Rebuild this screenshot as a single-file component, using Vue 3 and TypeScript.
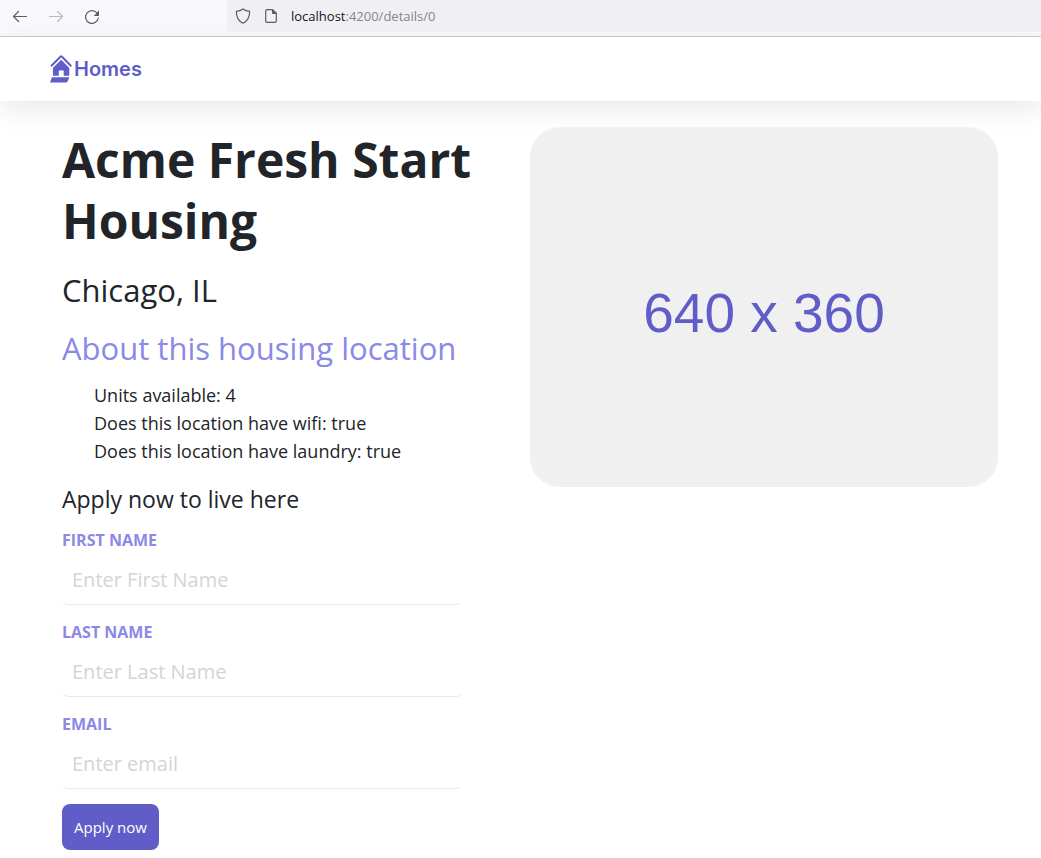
<script setup lang="ts">
import { reactive } from 'vue'

interface Field {
  id: 'firstName' | 'lastName' | 'email'
  label: string
  placeholder: string
  type: string
}

const location = {
  name: 'Acme Fresh Start Housing',
  city: 'Chicago',
  state: 'IL',
  availableUnits: 4,
  wifi: true,
  laundry: true,
}

const fields: Field[] = [
  { id: 'firstName', label: 'First Name', placeholder: 'Enter First Name', type: 'text' },
  { id: 'lastName', label: 'Last Name', placeholder: 'Enter Last Name', type: 'text' },
  { id: 'email', label: 'Email', placeholder: 'Enter email', type: 'email' },
]

const form = reactive({ firstName: '', lastName: '', email: '' })

function submit(): void {
  form.firstName = ''
  form.lastName = ''
  form.email = ''
}
</script>

<template>
  <div class="page">
    <div class="toolbar">
      <div class="nav-buttons">
        <button type="button" class="tool" aria-label="Back">
          <svg viewBox="0 0 16 16" width="16" height="16"><path d="M14.500 7.500H1.600M6.500 2.500 1.500 7.500 6.500 12.500" /></svg>
        </button>
        <button type="button" class="tool" aria-label="Forward" disabled>
          <svg viewBox="0 0 16 16" width="16" height="16"><path d="M1.500 7.500h12.900M9.500 2.500 14.500 7.500 9.500 12.500" /></svg>
        </button>
        <button type="button" class="tool" aria-label="Reload">
          <svg viewBox="0 0 16 16" width="16" height="16">
            <path d="M13 4A6.400 6.400 0 1 0 14.300 9" />
            <path class="solid" d="M15 1.200v5.300a.5.5 0 0 1-.5.5H9.800z" />
          </svg>
        </button>
      </div>
      <div class="address">
        <svg viewBox="0 0 16 16" width="16" height="16">
          <path d="M8 .9C9.900 2.300 12 3.100 14.600 3.300 14.800 9 12.500 13.200 8 15.200 3.500 13.200 1.200 9 1.400 3.300 4 3.100 6.100 2.300 8 .9z" />
        </svg>
        <svg viewBox="0 0 16 16" width="16" height="16">
          <path d="M9.500 1.700H4A1.300 1.300 0 0 0 2.700 3v10A1.300 1.300 0 0 0 4 14.300h8a1.300 1.300 0 0 0 1.300-1.300V5.500z" />
          <path class="solid" d="M9 1.200h.8L13.800 5.200V6H10a1 1 0 0 1-1-1z" />
        </svg>
        <span class="url"><span class="host">localhost</span>:4200/details/0</span>
      </div>
    </div>

    <header class="site-header">
      <a href="#" class="brand">
        <svg viewBox="0 0 22 28" width="22" height="28">
          <path class="roof" d="M1 11.300 10.400 1.700Q11.200 1 12 1.700L21.300 11.300" />
          <path d="M11.200 4.800 19.300 13v7.800H13.700V15.500H8.800v5.300H2.900V13z" />
          <path d="M2 22.200H19.300L17.600 26.600Q17.200 27.600 16 27.600H0z" />
        </svg>
        <span>Homes</span>
      </a>
    </header>

    <main class="details">
      <article class="listing">
        <h1>{{ location.name }}</h1>
        <p class="city">{{ location.city }}, {{ location.state }}</p>
        <section>
          <h2>About this housing location</h2>
          <ul>
            <li>Units available: {{ location.availableUnits }}</li>
            <li>Does this location have wifi: {{ location.wifi }}</li>
            <li>Does this location have laundry: {{ location.laundry }}</li>
          </ul>
        </section>
        <section>
          <h3>Apply now to live here</h3>
          <form @submit.prevent="submit">
            <template v-for="field in fields" :key="field.id">
              <label :for="field.id">{{ field.label }}</label>
              <input :id="field.id" v-model="form[field.id]" :type="field.type" :placeholder="field.placeholder" />
            </template>
            <button type="submit" class="primary">Apply now</button>
          </form>
        </section>
      </article>
      <div class="photo" role="img" aria-label="640 x 360">640 x 360</div>
    </main>
  </div>
</template>

<style>
body {
  margin: 0;
  background: #fff;
}
</style>

<style scoped>
.page {
  color: #212529;
  font-family: "Open Sans", "Noto Sans", sans-serif;
  font-size: 16px;
}

.toolbar {
  display: flex;
  height: 36px;
  background: #f9f9fb;
  border-bottom: 1px solid #ccccd0;
}

.nav-buttons {
  display: flex;
  gap: 20px;
  padding: 9px 12px 0;
  width: 203px;
}

.tool {
  width: 16px;
  height: 16px;
  padding: 0;
  border: 0;
  background: none;
}

.tool:disabled {
  opacity: 0.4;
}

.toolbar svg {
  display: block;
  flex: none;
  fill: none;
  stroke: #5b5b66;
  stroke-width: 1.2;
  stroke-linecap: round;
  stroke-linejoin: round;
}

.toolbar .solid {
  fill: #5b5b66;
  stroke: none;
}

.address {
  display: flex;
  flex: 1;
  align-items: center;
  gap: 12px;
  height: 32px;
  padding-left: 8px;
  border-radius: 0 0 0 4px;
  background: #f0f0f4;
}

.url {
  color: #85858c;
  font-size: 13px;
  line-height: 20px;
}

.host {
  color: #15141a;
}

.site-header {
  display: flex;
  align-items: center;
  height: 64px;
  padding: 0 50px;
  background: #fff;
  box-shadow: 0 8px 28px rgba(0, 0, 0, 0.09);
}

.brand {
  display: flex;
  align-items: center;
  gap: 2px;
  color: #605dc8;
  font-family: Inter, sans-serif;
  font-size: 20px;
  font-weight: 600;
  line-height: 28px;
  text-decoration: none;
}

.brand svg {
  fill: #605dc8;
}

.brand .roof {
  fill: none;
  stroke: #605dc8;
  stroke-width: 2;
}

.details {
  display: grid;
  grid-template-columns: 1fr 1fr;
  align-items: start;
  padding: 26px 43px 8px 62px;
}

h1,
h2,
h3,
p,
ul {
  margin: 0;
}

h1 {
  padding-top: 2px;
  font-size: 48px;
  font-weight: 700;
  line-height: 61px;
}

.city,
h2 {
  font-size: 31px;
  font-weight: 400;
  line-height: 38px;
}

.city {
  margin-top: 20px;
}

h2 {
  margin-top: 20px;
  color: #8b89e6;
}

ul {
  margin-top: 14px;
  padding-left: 32px;
  list-style: none;
  font-size: 18px;
  line-height: 28px;
}

h3 {
  margin-top: 20px;
  font-size: 23px;
  font-weight: 400;
  line-height: 28px;
}

form {
  display: flex;
  flex-direction: column;
  align-items: flex-start;
  margin-top: 15px;
}

label {
  color: #8b89e6;
  font-size: 16px;
  font-weight: 700;
  line-height: 25px;
  text-transform: uppercase;
}

input {
  box-sizing: border-box;
  width: 400px;
  max-width: 100%;
  height: 52px;
  margin-bottom: 15px;
  padding: 12px 10px 10px;
  border: 0;
  border-bottom: 1px solid #e8e7fa;
  border-radius: 6px;
  background: transparent;
  color: inherit;
  font: 20px "Open Sans", "Noto Sans", sans-serif;
}

input::placeholder {
  color: #d4d4d4;
  opacity: 1;
}

.primary {
  padding: 10px 12px;
  border: 0;
  border-radius: 8px;
  background: #605dc8;
  color: #fff;
  font: 15px/26px "Open Sans", "Noto Sans", sans-serif;
}

.photo {
  display: flex;
  align-items: center;
  justify-content: center;
  height: 360px;
  padding-top: 12px;
  box-sizing: border-box;
  border-radius: 30px;
  background: #f0f0f0;
  color: #605dc8;
  font-family: "Liberation Sans", Arial, sans-serif;
  font-size: 55px;
}
</style>
